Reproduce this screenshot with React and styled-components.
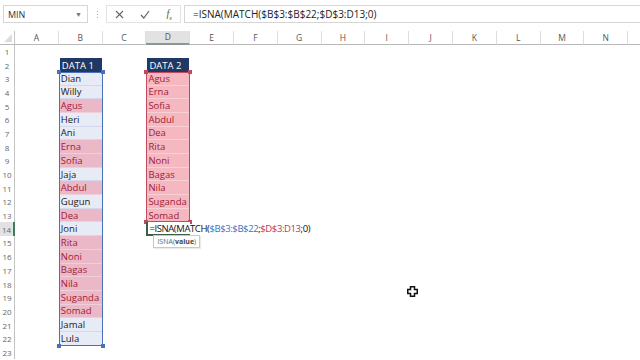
import React from "react"
import styled, { createGlobalStyle } from "styled-components"

const GlobalStyle = createGlobalStyle`
	html, body {
		margin: 0;
		padding: 0;
		background: #fff;
	}
	body {
		font-family: "Open Sans", "Liberation Sans", sans-serif;
	}
`

const Window = styled.div`
	position: relative;
	width: 640px;
	height: 360px;
	overflow: hidden;
	background: #fff;
`

const FormulaBar = styled.div`
	display: flex;
	align-items: flex-start;
	height: 31px;
	padding: 5px 0 0 3px;
	box-sizing: border-box;
`

const NameBox = styled.div`
	display: flex;
	align-items: center;
	justify-content: space-between;
	width: 85px;
	height: 18px;
	box-sizing: border-box;
	border: 1px solid #d6d6d6;
	padding: 0 5px 0 4px;
	font-size: 9px;
	color: #333;
`

const Arrow = styled.span`
	font-size: 7px;
	color: #777;
`

const Grip = styled.div`
	display: flex;
	flex-direction: column;
	justify-content: center;
	gap: 2px;
	width: 18px;
	height: 18px;
	align-items: center;

	span {
		width: 1px;
		height: 1px;
		background: #aaa;
	}
`

const ButtonBox = styled.div`
	display: flex;
	align-items: center;
	justify-content: space-around;
	width: 75px;
	height: 18px;
	box-sizing: border-box;
	border: 1px solid #e2e2e2;
	margin-right: 3px;
`

const Fx = styled.span`
	font-family: "Liberation Serif", serif;
	font-style: italic;
	font-size: 10px;
	color: #555;

	sub {
		font-size: 6px;
	}
`

const FormulaInput = styled.div`
	flex: 1;
	height: 18px;
	box-sizing: border-box;
	border: 1px solid #d6d6d6;
	border-right: none;
	padding-left: 8px;
	font-size: 10px;
	line-height: 16px;
	color: #222;
	white-space: nowrap;
`

const Sheet = styled.div`
	display: grid;
	grid-template-columns: 15px repeat(15, 43.8px);
	grid-template-rows: 13.5px repeat(23, 13.7px);
`

const Corner = styled.div`
	grid-column: 1;
	grid-row: 1;
	border-right: 1px solid #c4c4c4;
	border-bottom: 1px solid #b8b8b8;
	box-sizing: border-box;
	display: flex;
	align-items: flex-end;
	justify-content: flex-end;
	padding: 0 2px 2px 0;

	&::after {
		content: "";
		width: 0;
		height: 0;
		border-left: 8px solid transparent;
		border-bottom: 8px solid #dcdcdc;
	}
`

const ColHead = styled.div`
	grid-row: 1;
	display: flex;
	align-items: center;
	justify-content: center;
	box-sizing: border-box;
	border-right: 1px solid #dedede;
	border-bottom: ${p => (p.$active ? "2px solid #8a9a8e" : "1px solid #b8b8b8")};
	background: ${p => (p.$active ? "#e2e2e2" : "#fff")};
	font-size: 8.5px;
	color: #555;
`

const RowHead = styled.div`
	grid-column: 1;
	display: flex;
	align-items: center;
	justify-content: center;
	box-sizing: border-box;
	border-right: ${p => (p.$active ? "2px solid #3f7d56" : "1px solid #c4c4c4")};
	background: ${p => (p.$active ? "#e2e2e2" : "#fff")};
	font-size: 8px;
	color: #666;
`

const Cell = styled.div`
	position: relative;
	display: flex;
	align-items: center;
	box-sizing: border-box;
	padding-left: 2px;
	font-size: 9.5px;
	white-space: nowrap;
	background: ${p => p.$fill || "transparent"};
	color: ${p => p.$ink || "#222"};
	border-bottom: ${p => (p.$line ? `1px solid ${p.$line}` : "none")};
`

const HeadCell = styled(Cell)`
	background: #203864;
	color: #fff;
	margin: 0 1px;
`

const EditCell = styled.div`
	position: relative;
	z-index: 3;
	display: flex;
	align-items: center;
	padding-left: 1px;
	box-sizing: border-box;
	border-left: 2px solid #3d5e49;
	border-bottom: 2px solid #3d5e49;
	width: 44px;
	font-size: 9.5px;
	letter-spacing: -0.4px;
	white-space: nowrap;
	color: #111;
	background: #fff;
`

const Ref = styled.span`
	color: ${p => p.$c};
`

const Tip = styled.div`
	position: absolute;
	top: calc(100% + 1px);
	left: 5px;
	display: flex;
	align-items: center;
	height: 11px;
	padding: 0 3px;
	border: 1px solid #c8c8c8;
	background: #fff;
	font-size: 7px;
	letter-spacing: 0;
	color: #666;
	box-shadow: 1px 1px 1px rgba(0, 0, 0, 0.08);

	b {
		color: #444;
	}
`

const Range = styled.div`
	position: relative;
	z-index: 2;
	pointer-events: none;
	grid-column: ${p => p.$col} / span 1;
	grid-row: ${p => p.$from} / ${p => p.$to};
	border: 1.5px solid ${p => p.$c};
	box-sizing: border-box;
`

const Handle = styled.span`
	position: absolute;
	width: 4px;
	height: 4px;
	background: ${p => p.$c};
	${p => (p.$top ? "top: -3px;" : "bottom: -3px;")}
	${p => (p.$left ? "left: -3px;" : "right: -3px;")}
`

const Cursor = styled.svg`
	position: absolute;
	left: 407px;
	top: 286px;
`

const letters = "ABCDEFGHIJKLMNO".split("")

const data1 = [
	["Dian"], ["Willy"], ["Agus", 1], ["Heri"], ["Ani"], ["Erna", 1],
	["Sofia", 1], ["Jaja"], ["Abdul", 1], ["Gugun"], ["Dea", 1], ["Joni"],
	["Rita", 1], ["Noni", 1], ["Bagas", 1], ["Nila", 1], ["Suganda", 1],
	["Somad", 1], ["Jamal"], ["Lula"],
]

const data2 = ["Agus", "Erna", "Sofia", "Abdul", "Dea", "Rita", "Noni", "Bagas", "Nila", "Suganda", "Somad"]

const RED_INK = "#9e2036"

const renderCell = (row, col) => {
	const key = `${row}-${col}`
	const pos = { gridRow: row + 1, gridColumn: col + 2 }
	if (col === 1 && row === 2) return <HeadCell key={key} style={pos}>DATA 1</HeadCell>
	if (col === 3 && row === 2) return <HeadCell key={key} style={pos}>DATA 2</HeadCell>
	if (col === 1 && row >= 3 && row <= 22) {
		const [name, dup] = data1[row - 3]
		return (
			<Cell
				key={key}
				style={pos}
				$fill={dup ? "#ebb8c8" : "#e7ebf6"}
				$ink={dup ? RED_INK : "#222"}
				$line={row < 22 ? (dup ? "#f1cfda" : "#d3d9ea") : null}
			>
				{name}
			</Cell>
		)
	}
	if (col === 3 && row >= 3 && row <= 13) {
		return (
			<Cell key={key} style={pos} $fill="#f5b8c1" $ink={RED_INK} $line={row < 13 ? "#f8d0d6" : null}>
				{data2[row - 3]}
			</Cell>
		)
	}
	if (col === 3 && row === 14) {
		return (
			<EditCell key={key} style={pos}>
				=ISNA(MATCH(<Ref $c="#3f6fc0">$B$3:$B$22</Ref>;<Ref $c="#b8394f">$D$3:D13</Ref>;0)
				<Tip>
					ISNA(<b>value</b>)
				</Tip>
			</EditCell>
		)
	}
	return null
}

const App = () => {
	const rows = Array.from({ length: 23 }, (_, i) => i + 1)
	return (
		<Window>
			<GlobalStyle />
			<FormulaBar>
				<NameBox>
					MIN
					<Arrow>▼</Arrow>
				</NameBox>
				<Grip>
					<span />
					<span />
					<span />
				</Grip>
				<ButtonBox>
					<svg width="9" height="9" viewBox="0 0 9 9">
						<path d="M1 1 L8 8 M8 1 L1 8" stroke="#666" strokeWidth="1.1" />
					</svg>
					<svg width="10" height="9" viewBox="0 0 10 9">
						<path d="M1 5 L3.8 8 L9 1" stroke="#666" strokeWidth="1.2" fill="none" />
					</svg>
					<Fx>
						f<sub>x</sub>
					</Fx>
				</ButtonBox>
				<FormulaInput>=ISNA(MATCH($B$3:$B$22;$D$3:D13;0)</FormulaInput>
			</FormulaBar>
			<Sheet>
				<Corner />
				{letters.map((l, i) => (
					<ColHead key={l} style={{ gridColumn: i + 2 }} $active={l === "D"}>
						{l === "O" ? "" : l}
					</ColHead>
				))}
				{rows.map(r => (
					<RowHead key={r} style={{ gridRow: r + 1 }} $active={r === 14}>
						{r}
					</RowHead>
				))}
				{rows.map(r => letters.map((_, c) => renderCell(r, c)))}
				<Range $col={3} $from={4} $to={24} $c="#4a70b8">
					<Handle $c="#4a70b8" $top $left />
					<Handle $c="#4a70b8" $top />
					<Handle $c="#4a70b8" $left />
					<Handle $c="#4a70b8" />
				</Range>
				<Range $col={5} $from={4} $to={15} $c="#c24a60">
					<Handle $c="#c24a60" $top $left />
					<Handle $c="#c24a60" $top />
					<Handle $c="#c24a60" $left />
					<Handle $c="#c24a60" />
				</Range>
			</Sheet>
			<Cursor width="11" height="11" viewBox="0 0 11 11">
				<path
					d="M3.5 0.75 H7.5 V3.5 H10.25 V7.5 H7.5 V10.25 H3.5 V7.5 H0.75 V3.5 H3.5 Z"
					fill="#fff"
					stroke="#111"
					strokeWidth="1.5"
				/>
			</Cursor>
		</Window>
	)
}

export default App
